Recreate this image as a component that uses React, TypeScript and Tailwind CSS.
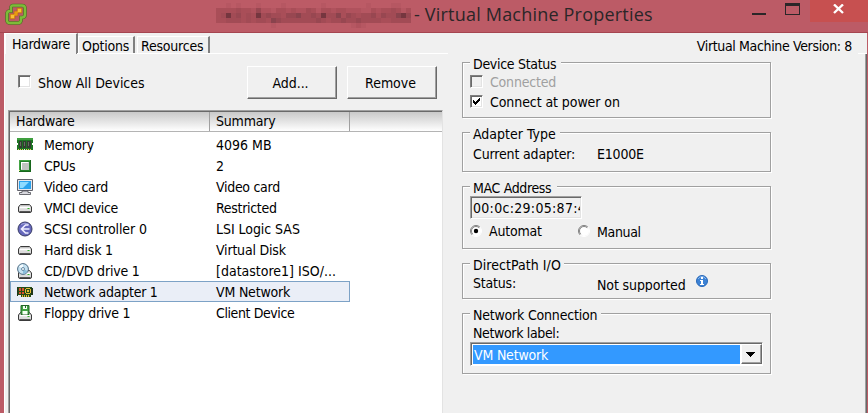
import type { ReactNode } from 'react';

const MOSAIC = [
  '001010001000010000000100000000100001100',
  '333343325221332322431332332221132334313',
  '347453437454435564454744635434453544675',
  '334443434436544444445434454454444334444',
  '000000000001000000000000000121000000000',
];

const SHADES = ['#bc5b66', '#b65762', '#b0525d', '#a94e58', '#a24b55', '#984751', '#8a434d', '#75363f'];

function RedactedName() {
  return (
    <svg width="195" height="25" viewBox="0 0 195 25" shapeRendering="crispEdges" className="block shrink-0">
      {MOSAIC.map((row, y) =>
        row.split('').map((c, x) => (
          <rect key={`${x}-${y}`} x={x * 5} y={y * 5} width="5" height="5" fill={SHADES[Number(c)]} />
        )),
      )}
    </svg>
  );
}

function AppLogo() {
  return (
    <svg width="22" height="22" viewBox="0 0 22 22" fill="none" className="block">
      <path d="M8 2.5h9q3 0 3 3v6q0 3-3 3h-1v2.500q0 3-3 3H5q-3 0-3-3v-6q0-3 3-3h1V5q0-2.500 2-2.500Z" stroke="#496c22" strokeWidth="3.600" />
      <path d="M8 2.500h9q3 0 3 3v6q0 3-3 3h-1v2.500q0 3-3 3H5q-3 0-3-3v-6q0-3 3-3h1V5q0-2.500 2-2.500Z" stroke="#7dbb38" strokeWidth="2.400" />
      <path d="M5 11h4V8h3V5h5v5h-4v3h-3v3H5Z" fill="#e99a10" stroke="#a85e2b" strokeWidth=".6" />
      <path d="M6 12h3v3H6ZM13 6h3v3h-3Z" fill="#f9bf35" />
    </svg>
  );
}

type IconName = 'memory' | 'cpu' | 'video' | 'drive' | 'scsi' | 'cd' | 'nic' | 'floppy';

function DriveShape({ y = 0 }: { y?: number }) {
  return (
    <g transform={`translate(0 ${y})`}>
      <path d="M3.500 4.500h9l2 2.500v4q0 1.500-1.500 1.500H3q-1.500 0-1.500-1.500V7Z" fill="#dcdcdc" stroke="#3a3a3a" />
      <path d="M4 5.500h8" stroke="#c2c2c2" />
      <path d="M3 7.500h10" stroke="#fff" strokeWidth="1.500" />
      <path d="M2.500 11.500h11" stroke="#555" />
      <path d="M10.500 8.500h2" stroke="#35b52d" />
    </g>
  );
}

function DeviceIcon({ name }: { name: IconName }) {
  return (
    <svg width="16" height="16" viewBox="0 0 16 16" fill="none" className="block shrink-0">
      {name === 'memory' && (
        <g shapeRendering="crispEdges">
          <path d="M0 1h16v12H0Z" fill="#1d7423" />
          <path d="M0 1h16v2H0Z" fill="#3f9f3f" />
          <path d="M2 4h3v7H2ZM6 4h3v7H6ZM10 4h4v7h-4Z" fill="#333b32" />
          <path d="M3 5h1v4H3ZM7 5h1v4H7ZM11 5h1v4h-1Z" fill="#65705f" />
          <path d="M1 12h1v1H1ZM3 12h1v1H3ZM5 12h1v1H5ZM9 12h1v1H9ZM11 12h1v1h-1ZM13 12h1v1h-1Z" fill="#e6cf5b" />
          <path d="M7 12h1v1H7ZM0 6h1v2H0ZM15 6h1v2h-1Z" fill="#fff" />
        </g>
      )}
      {name === 'cpu' && (
        <g shapeRendering="crispEdges">
          <path d="M2 2h12v12H2Z" fill="#17661c" />
          <path d="M2 2h11v11H2Z" fill="#43a344" />
          <path d="M3 3h10v10H3Z" fill="#23812a" />
          <path d="M4 4h8v8H4Z" fill="#d9dcd8" />
          <path d="M5 5h7v7H5Z" fill="#bfc4bf" />
          <path d="M4 4h7v1H4ZM4 4h1v7H4Z" fill="#fff" />
          <path d="M2 12h1v1H2Z" fill="#d5ed7c" />
        </g>
      )}
      {name === 'video' && (
        <g>
          <path d="M.500 .500h15v11H.500Z" fill="#e7e7ec" stroke="#62636c" />
          <path d="M2 2h12v8H2Z" fill="#2ba3ed" />
          <path d="M3 3h9L6 9H3Z" fill="#8edbff" />
          <path d="M5 12h6v1.500h2.500V15.500H2.500V13.500H5Z" fill="#d9d9df" stroke="#4b4c53" strokeWidth=".8" />
        </g>
      )}
      {name === 'drive' && <DriveShape />}
      {name === 'scsi' && (
        <g>
          <circle cx="8" cy="8" r="7" fill="#6668bc" stroke="#363a63" />
          <path d="M4 3.500Q8 .8 12 3.500" stroke="#a3a5dd" />
          <path d="M11.500 4 8.500 4 4.500 8l4 4h3M5 8h7.500" stroke="#eef" strokeWidth="1.700" />
        </g>
      )}
      {name === 'cd' && (
        <g>
          <DriveShape y={3} />
          <circle cx="6" cy="6" r="5.400" fill="#c6e2f1" stroke="#4c6b83" />
          <path d="M6 6 2 3.500A5 5 0 0 1 6 1.200Z" fill="#f4fbff" />
          <path d="m6 6 4.500 2A5 5 0 0 1 6 11Z" fill="#8bbedb" />
          <circle cx="6" cy="6" r="1.500" fill="#fff" stroke="#668ba6" />
        </g>
      )}
      {name === 'nic' && (
        <g shapeRendering="crispEdges">
          <path d="M0 3h15v8h-1v2H4v-2H0Z" fill="#284d16" />
          <path d="M0 3h1v9H0ZM14 4h2v7h-2Z" fill="#20351a" />
          <path d="M2 4h2v3H2ZM5 4h2v3H5ZM2 8h2v2H2ZM5 8h2v2H5Z" fill="#df512d" />
          <path d="M9 4h4v1H9ZM8 5h1v4H8ZM13 5h1v4h-1ZM9 9h4v1H9ZM10 6h2v2h-2ZM5 11h1v2H5ZM7 11h1v2H7ZM9 11h1v2H9ZM11 11h1v2h-1Z" fill="#e4bd38" />
        </g>
      )}
      {name === 'floppy' && (
        <g>
          <DriveShape y={3} />
          <path d="M4 .500h8v9H4Z" fill="#41a442" stroke="#246527" />
          <path d="M6 1h4v3H6ZM5.500 6h5v3.500h-5Z" fill="#f5fff4" />
          <path d="M8 1h1v2H8Z" fill="#286d2b" />
        </g>
      )}
    </svg>
  );
}

type Device = { icon: IconName; name: string; summary: string; nameClass?: string; summaryClass?: string; selected?: boolean };

const DEVICES: Device[] = [
  { icon: 'memory', name: 'Memory', summary: '4096 MB', summaryClass: 'tracking-[0px]' },
  { icon: 'cpu', name: 'CPUs', summary: '2' },
  { icon: 'video', name: 'Video card', summary: 'Video card', nameClass: 'tracking-[-0.3px]', summaryClass: 'tracking-[-0.3px]' },
  { icon: 'drive', name: 'VMCI device', summary: 'Restricted', nameClass: 'tracking-[-0.3px]', summaryClass: 'tracking-[-0.3px]' },
  { icon: 'scsi', name: 'SCSI controller 0', summary: 'LSI Logic SAS', nameClass: 'tracking-[-0.1px]', summaryClass: 'tracking-[-0.05px]' },
  { icon: 'drive', name: 'Hard disk 1', summary: 'Virtual Disk', nameClass: 'tracking-[-0.25px]' },
  { icon: 'cd', name: 'CD/DVD drive 1', summary: '[datastore1] ISO/...', summaryClass: 'tracking-[0px]' },
  { icon: 'nic', name: 'Network adapter 1', summary: 'VM Network', nameClass: 'tracking-[-0.25px]', selected: true },
  { icon: 'floppy', name: 'Floppy drive 1', summary: 'Client Device', nameClass: 'tracking-[-0.25px]', summaryClass: 'tracking-[-0.4px]' },
];

function TitleBar() {
  return (
    <header className="flex h-[33px] shrink-0 items-start border-b border-[#a54550] bg-[#bc5b66]">
      <div className="w-[216px] pt-[3px] pl-[5px]">
        <AppLogo />
      </div>
      <div className="pt-[3px]">
        <RedactedName />
      </div>
      <h1 className="ml-[3px] w-[329px] pt-[2px] font-['Open_Sans','Noto_Sans',sans-serif] text-[18px] leading-[24px] tracking-[0.2px] whitespace-nowrap text-[#2b2628] [font-stretch:normal]">
        - Virtual Machine Properties
      </h1>
      <svg width="67" height="22" viewBox="0 0 67 22" shapeRendering="crispEdges" className="block shrink-0">
        <path d="M9 13h14v2H9Z" fill="#2b2628" />
        <path d="M42 3h15v12H42Zm1 3v8h13V6Z" fill="#2b2628" fillRule="evenodd" />
      </svg>
      <div className="flex h-[22px] flex-1 justify-center bg-[#c75050] pt-1">
        <svg width="12" height="10" viewBox="0 0 12 10" className="block">
          <path d="m1 .5 9 8.500m0-8.500-9 8.500" stroke="#fff" strokeWidth="2.400" />
        </svg>
      </div>
    </header>
  );
}

function Tab({ children, className }: { children: ReactNode; className: string }) {
  return (
    <div className={`border-t border-l border-white border-r-2 border-r-[#808080] whitespace-nowrap ${className}`}>{children}</div>
  );
}

function Button({ children, className }: { children: ReactNode; className: string }) {
  return (
    <button
      className={`h-[33px] border border-t-white border-l-white border-r-[#696969] border-b-[#696969] pr-[3px] tracking-[-0.05px] shadow-[inset_-1px_-1px_#a0a0a0] ${className}`}
    >
      {children}
    </button>
  );
}

function CheckBox({ checked, disabled }: { checked?: boolean; disabled?: boolean }) {
  return (
    <span
      className={`mb-0.5 flex h-[13px] w-[13px] shrink-0 items-center justify-center border border-t-[#808080] border-r-white border-b-white border-l-[#808080] shadow-[inset_1px_1px_#696969,inset_-1px_-1px_#e3e3e3] ${disabled ? 'bg-[#f0f0f0]' : 'bg-white'}`}
    >
      {checked && (
        <svg width="9" height="9" viewBox="0 0 9 9" shapeRendering="crispEdges">
          <path d="M1 3h1v1h1v1h1V4h1V3h1V2h1V1h1v3H7v1H6v1H5v1H4v1H3V7H2V6H1Z" fill="#000" />
        </svg>
      )}
    </span>
  );
}

function Radio({ checked }: { checked?: boolean }) {
  return (
    <svg width="12" height="12" viewBox="0 0 12 12" className="block shrink-0">
      <circle cx="6" cy="6" r="5" fill="#fff" />
      <path d="M2.100 9.900A5.500 5.500 0 0 1 9.900 2.100" fill="none" stroke="#808080" />
      <path d="M9.900 2.100A5.500 5.500 0 0 1 2.100 9.900" fill="none" stroke="#fff" />
      <path d="M2.800 9.200A4.500 4.500 0 0 1 9.200 2.800" fill="none" stroke="#696969" strokeWidth=".8" />
      {checked && <circle cx="6" cy="6" r="2.200" fill="#000" />}
    </svg>
  );
}

function Group({ title, titleClass, className, children }: { title: string; titleClass: string; className: string; children: ReactNode }) {
  return (
    <section className={`w-[309px] border border-[#a0a0a0] shadow-[inset_1px_1px_#fff,1px_1px_#fff] ${className}`}>
      <h2 className={`-mt-[9px] ml-[7px] h-[18px] bg-[#f0f0f0] pl-[3px] leading-[20px] whitespace-nowrap ${titleClass}`}>{title}</h2>
      {children}
    </section>
  );
}

function HardwareList() {
  return (
    <div className="ml-[3px] h-[303px] w-[435px] border-t border-l border-[#a0a0a0] border-r border-r-[#e3e3e3]">
      <div className="h-full border-t border-l border-[#696969] bg-white">
        <div className="flex h-[20px] border-b border-[#b4b4b4] bg-linear-to-b from-[#c9c9c9] to-white leading-[18px]">
          <div className="w-[200px] border-r border-[#a0a0a0] pl-[6px] tracking-[-0.3px]">Hardware</div>
          <div className="w-[140px] border-r border-[#a0a0a0] pl-[6px]">Summary</div>
        </div>
        <div className="w-[340px] pt-[2px]">
          {DEVICES.map((d) => (
            <div
              key={d.name}
              className={`flex h-[21px] items-center border pl-[6px] whitespace-nowrap ${d.selected ? 'border-[#7da2c6] bg-[#eaeef7]' : 'border-transparent'}`}
            >
              <DeviceIcon name={d.icon} />
              <span className={`ml-[11px] w-[172px] ${d.nameClass ?? ''}`}>{d.name}</span>
              <span className={d.summaryClass ?? ''}>{d.summary}</span>
            </div>
          ))}
        </div>
      </div>
    </div>
  );
}

function Settings() {
  return (
    <div className="w-[310px] pt-[9px]">
      <Group title="Device Status" titleClass="w-[91px] tracking-[-0.3px]" className="h-[56px]">
        <div className="flex h-[20px] items-center pl-[7px] text-[#a0a0a0]">
          <CheckBox disabled />
          <span className="ml-[7px]">Connected</span>
        </div>
        <div className="flex h-[20px] items-center pl-[7px] tracking-[-0.08px]">
          <CheckBox checked />
          <span className="ml-[7px]">Connect at power on</span>
        </div>
      </Group>
      <Group title="Adapter Type" titleClass="w-[90px] tracking-[0px]" className="mt-[14px] h-[40px]">
        <div className="flex h-[24px] items-center pl-[10px]">
          <span className="w-[124px] tracking-[-0.15px]">Current adapter:</span>
          <span>E1000E</span>
        </div>
      </Group>
      <Group title="MAC Address" titleClass="w-[87px] tracking-[-0.35px]" className="mt-[14px] h-[63px]">
        <div className="ml-[7px] h-[23px] w-[112px] border border-t-[#a0a0a0] border-r-white border-b-white border-l-[#a0a0a0] shadow-[inset_1px_1px_#696969,inset_-1px_-1px_#e3e3e3]">
          <div className="ml-0.5 w-[107px] overflow-hidden leading-[23px] tracking-[0.300px] whitespace-nowrap">00:0c:29:05:87:4</div>
        </div>
        <div className="flex h-[24px] items-center pl-[7px]">
          <Radio checked />
          <span className="ml-[7px] w-[89px]">Automat</span>
          <Radio />
          <span className="ml-[7px] pt-0.5 tracking-[-0.35px]">Manual</span>
        </div>
      </Group>
      <Group title="DirectPath I/O" titleClass="w-[94px] tracking-[0.05px]" className="mt-[14px] h-[36px]">
        <div className="flex h-[20px] items-center pl-[10px]">
          <span className="w-[124px]">Status:</span>
          <span className="h-[17px] w-[99px] overflow-hidden leading-[20px] tracking-[-0.12px] whitespace-nowrap">Not supported</span>
          <svg width="12" height="12" viewBox="0 0 12 12" className="mb-1 block">
            <circle cx="6" cy="6" r="5.500" fill="#3c82d5" stroke="#2868b8" />
            <path d="M2 4q4-5 8 0" stroke="#8cb9ee" fill="none" />
            <path d="M5 2h2v2H5ZM4 5h3v4h1v1H4V9h1V6H4Z" fill="#fff" />
          </svg>
        </div>
      </Group>
      <Group title="Network Connection" titleClass="w-[131px]" className="mt-[14px] h-[61px]">
        <div className="h-[19px] pl-[10px] leading-[20px] tracking-[-0.35px]">Network label:</div>
        <div className="ml-[7px] flex h-[24px] w-[293px] border border-t-[#a0a0a0] border-r-white border-b-white border-l-[#a0a0a0]">
          <div className="flex flex-1 border-t border-l border-[#696969] bg-white pb-px">
            <div className="mt-px ml-px flex-1 bg-[#3399ff] pl-px leading-[20px] text-white">VM Network</div>
            <div className="ml-px flex w-[21px] items-center justify-center border border-t-white border-l-white border-r-[#696969] border-b-[#696969] bg-[#f0f0f0] pr-0.5 shadow-[inset_-1px_-1px_#a0a0a0]">
              <svg width="9" height="5" viewBox="0 0 9 5" shapeRendering="crispEdges">
                <path d="M0 0h9v1H8v1H7v1H6v1H5v1H4V4H3V3H2V2H1V1H0Z" fill="#000" />
              </svg>
            </div>
          </div>
        </div>
      </Group>
    </div>
  );
}

export default function App() {
  return (
    <div className="flex h-[413px] w-[868px] flex-col overflow-hidden bg-[#bc5b66] font-['DejaVu_Sans_Condensed','DejaVu_Sans',sans-serif] text-[14px] leading-[18px] tracking-[-0.2px] text-black [font-stretch:condensed]">
      <TitleBar />
      <main className="ml-1 flex h-[380px] w-[863px] flex-col border-l border-white bg-[#f0f0f0]">
        <div className="flex h-[20px] shrink-0">
          <Tab className="h-[21px] w-[73px] pt-px pl-[6px] tracking-[-0.35px]">Hardware</Tab>
          <Tab className="mt-[3px] h-[17px] w-[57px] overflow-hidden pl-[3px]">Options</Tab>
          <Tab className="mt-[3px] ml-[2px] h-[17px] w-[73px] overflow-hidden pl-[3px]">Resources</Tab>
          <div className="flex-1 pt-[4px] pr-[15px] text-right tracking-[-0.35px]">Virtual Machine Version: 8</div>
        </div>
        <div className="flex flex-1">
          <div className="w-[457px]">
            <div className="ml-[72px] h-px w-[371px] bg-white" />
            <div className="flex h-[56px] pt-[12px]">
              <div className="flex h-[33px] w-[242px] items-center pl-[13px] tracking-[-0.05px]">
                <CheckBox />
                <span className="ml-[7px]">Show All Devices</span>
              </div>
              <Button className="w-[90px]">Add...</Button>
              <Button className="ml-[10px] w-[90px]">Remove</Button>
            </div>
            <HardwareList />
          </div>
          <Settings />
          <div className="ml-auto w-[9px] border-t border-white">
            <div className="ml-auto h-full w-[2px] border-l border-[#a0a0a0] bg-[#696969]" />
          </div>
        </div>
      </main>
    </div>
  );
}
